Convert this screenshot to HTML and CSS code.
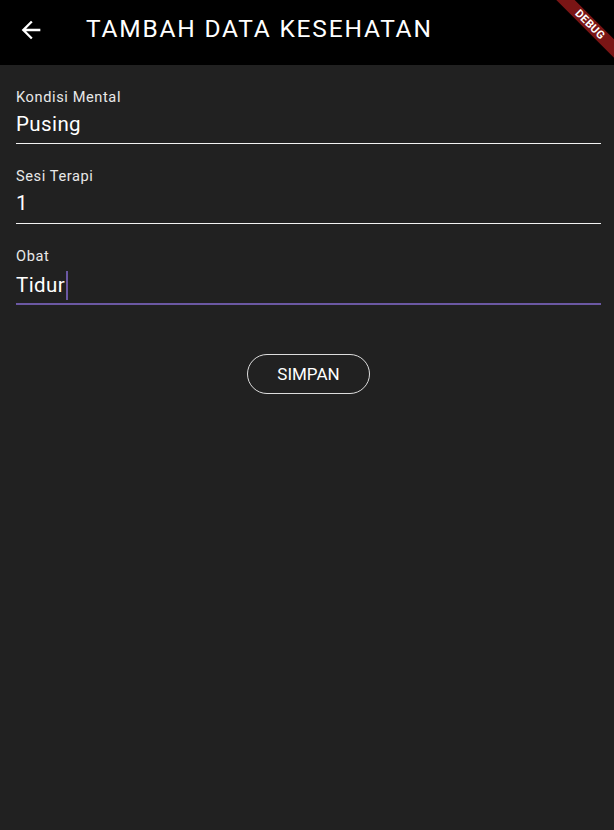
FILE: index.html
```html
<!DOCTYPE html>
<html>
<head>
<meta charset="utf-8">
<link rel="stylesheet" href="styles.css">
</head>
<body>
<header class="appbar">
  <div class="back">
    <svg viewBox="0 0 24 24" width="28" height="28"><path fill="#fff" d="M20 11H7.83l5.59-5.59L12 4l-8 8 8 8 1.41-1.41L7.83 13H20v-2z"/></svg>
  </div>
  <h1 class="title">TAMBAH DATA KESEHATAN</h1>
  <div class="debug"><span>DEBUG</span></div>
</header>
<main class="form">
  <div class="field first">
    <div class="label">Kondisi Mental</div>
    <div class="value">Pusing</div>
  </div>
  <div class="field">
    <div class="label">Sesi Terapi</div>
    <div class="value">1</div>
  </div>
  <div class="field focused">
    <div class="label">Obat</div>
    <div class="value">Tidur<span class="cursor"></span></div>
  </div>
  <div class="actions">
    <button class="btn">SIMPAN</button>
  </div>
</main>
</body>
</html>
```
FILE: styles.css
```css
* { box-sizing: border-box; }
html, body { margin: 0; padding: 0; }
body {
  background: #212121;
  font-family: Roboto, "Liberation Sans", sans-serif;
  color: #fff;
  width: 614px;
  height: 830px;
  overflow: hidden;
}
.appbar {
  position: relative;
  height: 65px;
  background: #000;
  display: flex;
  align-items: flex-start;
  overflow: hidden;
}
.back {
  width: 28px;
  height: 28px;
  margin-left: 17px;
  margin-top: 15.5px;
  display: flex;
}
.title {
  margin: 15px 0 0 41px;
  font-size: 24.5px;
  font-weight: 400;
  letter-spacing: 1.8px;
  line-height: 28px;
}
.debug {
  position: absolute;
  top: 0;
  right: 0;
  width: 80px;
  height: 80px;
  overflow: hidden;
}
.debug span {
  position: absolute;
  top: 17.5px;
  left: -4px;
  width: 120px;
  height: 13px;
  transform: rotate(45deg);
  background: #7a1515;
  color: #fff;
  font-size: 11px;
  font-weight: 700;
  text-align: center;
  line-height: 13px;
  letter-spacing: 0.3px;
  box-shadow: 0 1px 2px rgba(0,0,0,0.4);
}
.form {
  padding: 0 13px 0 16px;
}
.field {
  height: 80px;
  padding-top: 23px;
  border-bottom: 1px solid #f2f2f2;
}
.field.first {
  height: 79px;
}
.field.focused {
  border-bottom: 2px solid #6b58a3;
  height: 81px;
}
.label {
  font-size: 14.6px;
  line-height: 18px;
  letter-spacing: 0.6px;
  color: #e8e8e8;
}
.value {
  font-size: 20.5px;
  line-height: 28px;
  letter-spacing: 0.4px;
  margin-top: 4px;
  display: flex;
  align-items: center;
}
.cursor {
  display: inline-block;
  width: 2px;
  height: 29px;
  background: #6b58a3;
  margin-left: 1px;
  margin-top: 2px;
}
.actions {
  display: flex;
  justify-content: center;
  padding-top: 49px;
}
.btn {
  width: 123px;
  height: 40px;
  border-radius: 20px;
  border: 1px solid #ddd;
  background: transparent;
  color: #fff;
  font-family: Roboto, "Liberation Sans", sans-serif;
  font-size: 17px;
  font-weight: 400;
  letter-spacing: 0;
  margin-left: 0;
  cursor: pointer;
}
```
